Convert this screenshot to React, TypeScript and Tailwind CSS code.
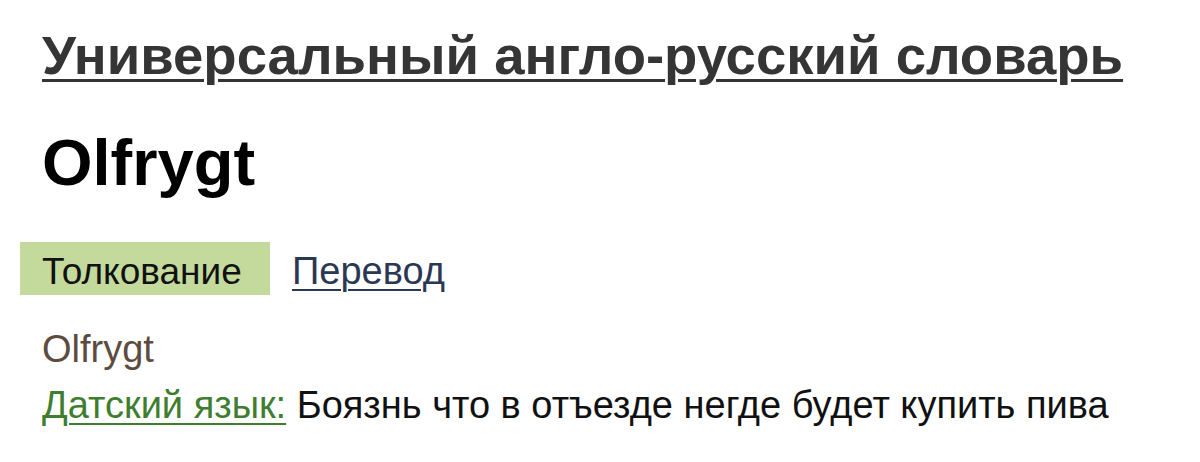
export default function App() {
  return (
    <div className="min-h-[462px] bg-white pl-[42px] pt-[29px] font-['Liberation_Sans',Arial,sans-serif]">
      {/* Dictionary heading */}
      <a
        href="#"
        className="block w-fit text-[54.5px] leading-[54px] font-bold text-[#353535] underline decoration-[3px] underline-offset-[5px]"
      >
        Универсальный англо-русский словарь
      </a>

      {/* Headword */}
      <h1 className="mt-[47px] text-[65px] leading-[65px] font-bold text-black">Olfrygt</h1>

      {/* Tabs */}
      <div className="mt-[47px] -ml-[22px] flex items-start">
        <div className="h-[53px] w-[250px] bg-[#c4da9d] pl-[22px] pt-[6px] text-[37px] leading-[47px] text-[#111]">
          Толкование
        </div>
        <a
          href="#"
          className="ml-[22px] pt-[6px] text-[38px] leading-[47px] text-[#2b3855] underline decoration-[2px] underline-offset-[5px]"
        >
          Перевод
        </a>
      </div>

      {/* Entry */}
      <div className="mt-[35px] text-[38px] leading-[38px] text-[#5c4c40]">Olfrygt</div>
      <p className="mt-[18px] text-[38px] leading-[38px] text-[#111]">
        <a href="#" className="text-[#3f7d30] underline decoration-[2px] underline-offset-[5px]">
          Датский язык:
        </a>{' '}
        Боязнь что в отъезде негде будет купить пива
      </p>
    </div>
  )
}
